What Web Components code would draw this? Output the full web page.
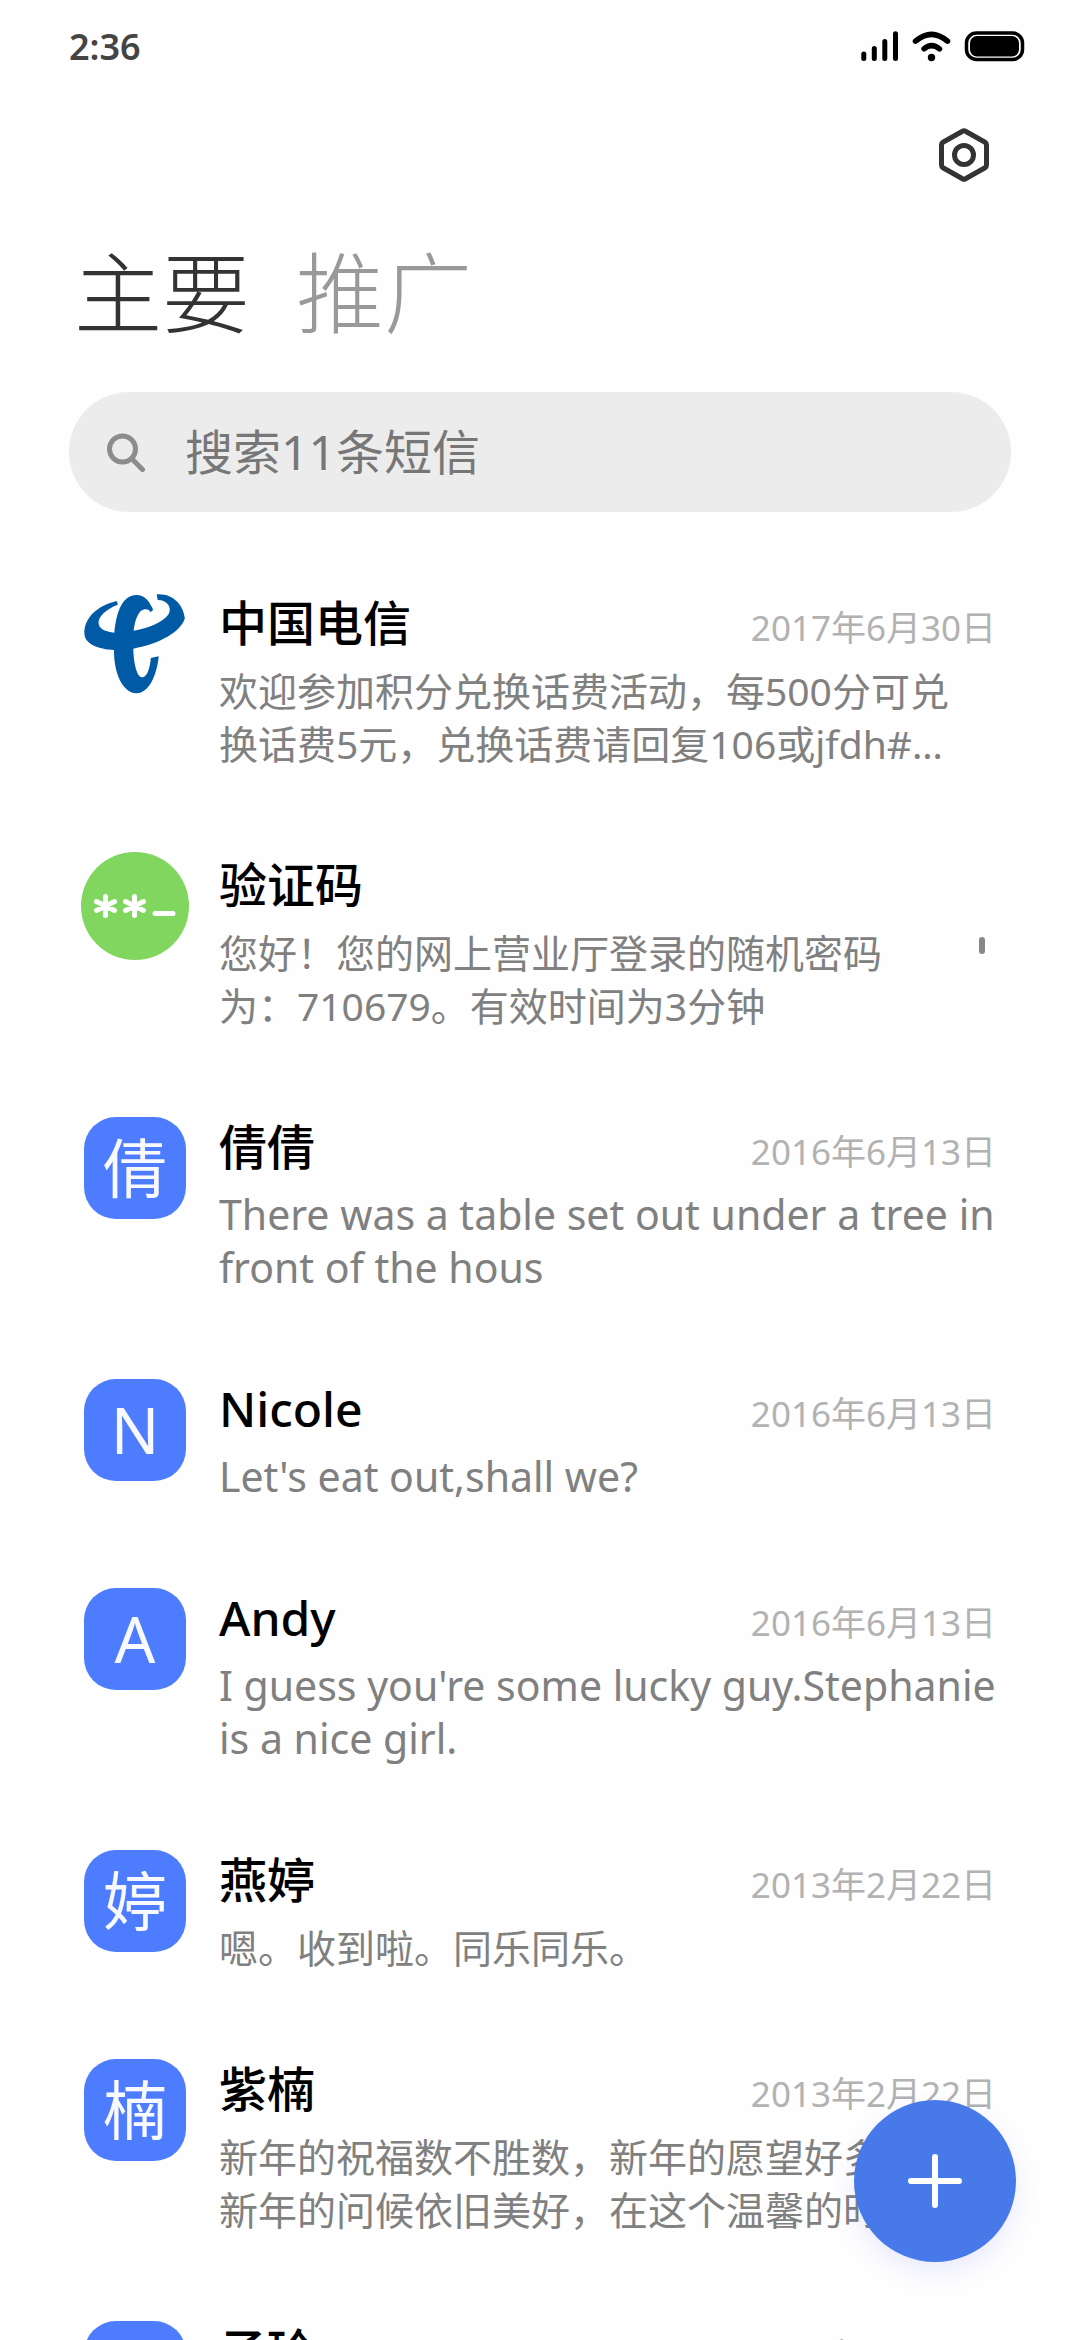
<!DOCTYPE html>
<html lang="zh-CN">
<head>
<meta charset="utf-8">
<meta name="viewport" content="width=device-width, initial-scale=1">
<title>短信</title>
<style>
  html, body { margin: 0; height: 100%; }
  body { background: #fefefe; color: #000; font-family: "Noto Sans", "Noto Sans CJK SC", sans-serif; }
</style>
</head>
<body>
<sms-app>
  <status-bar slot="status">2:36</status-bar>
  <settings-bar slot="tools"></settings-bar>
  <folder-tabs slot="tabs"><span slot="active">主要</span><span slot="other">推广</span></folder-tabs>
  <search-box slot="search" hint="搜索11条短信"></search-box>

  <thread-item><telecom-logo slot="avatar"></telecom-logo><span slot="name">中国电信</span><span slot="date">2017年6月30日</span>欢迎参加积分兑换话费活动，每500分可兑<br>换话费5元，兑换话费请回复106或jfdh#…</thread-item>
  <thread-item muted><code-avatar slot="avatar"></code-avatar><span slot="name">验证码</span>您好！您的网上营业厅登录的随机密码为：710679。有效时间为3分钟</thread-item>
  <thread-item lang="en"><letter-avatar slot="avatar" lang="zh-CN">倩</letter-avatar><span slot="name" lang="zh-CN">倩倩</span><span slot="date" lang="zh-CN">2016年6月13日</span>There was a table set out under a tree in front of the hous</thread-item>
  <thread-item lang="en"><letter-avatar slot="avatar">N</letter-avatar><span slot="name">Nicole</span><span slot="date" lang="zh-CN">2016年6月13日</span>Let's eat out,shall we?</thread-item>
  <thread-item lang="en"><letter-avatar slot="avatar">A</letter-avatar><span slot="name">Andy</span><span slot="date" lang="zh-CN">2016年6月13日</span>I guess you're some lucky guy.Stephanie is a nice girl.</thread-item>
  <thread-item><letter-avatar slot="avatar">婷</letter-avatar><span slot="name">燕婷</span><span slot="date">2013年2月22日</span>嗯。收到啦。同乐同乐。</thread-item>
  <thread-item><letter-avatar slot="avatar">楠</letter-avatar><span slot="name">紫楠</span><span slot="date">2013年2月22日</span>新年的祝福数不胜数，新年的愿望好多多，新年的问候依旧美好，在这个温馨的时刻…</thread-item>
  <thread-item><letter-avatar slot="avatar">玲</letter-avatar><span slot="name">子玲</span><span slot="date">2013年2月22日</span>新年快乐</thread-item>

  <compose-button slot="compose"></compose-button>
</sms-app>

<script>
const define = (name, html) => {
  const template = document.createElement('template');
  template.innerHTML = html;
  customElements.define(name, class extends HTMLElement {
    constructor() {
      super();
      this.attachShadow({ mode: 'open' }).append(template.content.cloneNode(true));
    }
    connectedCallback() {
      const input = this.shadowRoot.querySelector('input');
      if (input) input.placeholder = this.getAttribute('hint');
    }
  });
};

define('sms-app', `
  <style>
    :host { display: flex; flex-direction: column; height: 100vh; position: relative; overflow: hidden; }
    main { flex: 1; min-height: 0; overflow: hidden; padding-top: 42px; }
    ::slotted([slot="compose"]) { position: absolute; right: 64px; bottom: 78px; }
  </style>
  <slot name="status"></slot>
  <slot name="tools"></slot>
  <slot name="tabs"></slot>
  <slot name="search"></slot>
  <main><slot></slot></main>
  <slot name="compose"></slot>`);

define('status-bar', `
  <style>
    :host { display: flex; justify-content: space-between; align-items: center; height: 92px; padding: 0 54px 0 69px; color: #444; font-size: 36px; font-weight: 600; }
    svg { display: block; }
  </style>
  <slot></slot>
  <svg width="166" height="32" viewBox="860 30 166 32" aria-hidden="true">
    <g stroke="#000" stroke-width="5" stroke-linecap="round" fill="none">
      <path d="M863.8 54v4.500M874.300 48.500v10M884.800 41.500v17M895.500 33.700v24.800"/>
      <path d="M915.500 41.200Q931.500 27.500 947.500 41.200" stroke-width="5.500"/>
      <path d="M924 48.800Q931.500 42.500 939.500 48.800" stroke-width="5.500"/>
    </g>
    <circle cx="931.500" cy="57.500" r="3.700"/>
    <rect x="966.500" y="33" width="56" height="26.500" rx="10" fill="#fff" stroke="#000" stroke-width="3.500"/>
    <rect x="970" y="36" width="49" height="20.500" rx="7" fill="#000"/>
  </svg>`);

define('settings-bar', `
  <style>
    :host { display: flex; justify-content: flex-end; height: 126px; align-items: center; padding-right: 86px; }
    button { border: 0; padding: 0; background: none; }
    svg { display: block; }
  </style>
  <button aria-label="设置">
    <svg width="60" height="60" viewBox="0 0 60 60" fill="none" stroke="#333" stroke-width="5" stroke-linejoin="round">
      <path d="M28.500 6.200Q30 5.300 31.500 6.200L51 17.200Q52.500 18.100 52.500 20V40Q52.500 41.900 51 42.800L31.500 53.800Q30 54.700 28.500 53.800L9 42.800Q7.500 41.900 7.500 40V20Q7.500 18.100 9 17.200Z"/>
      <circle cx="30" cy="30" r="9.500"/>
    </svg>
  </button>`);

define('folder-tabs', `
  <style>
    :host { display: block; padding: 6px 74px 0; }
    nav { display: flex; gap: 46px; }
    button { border: 0; padding: 0; background: none; font: 300 88px/128px "Noto Sans CJK SC", sans-serif; color: #999; }
    .active { color: #333; }
  </style>
  <nav>
    <button class="active"><slot name="active"></slot></button>
    <button><slot name="other"></slot></button>
  </nav>`);

define('search-box', `
  <style>
    :host { display: block; margin: 40px 69px 0; }
    label { display: flex; align-items: center; gap: 38px; height: 120px; padding: 0 36px; border-radius: 60px; background: #ececec; }
    svg { flex: none; }
    input { flex: 1; min-width: 0; border: 0; padding: 0; background: none; outline: 0; font: 400 48px/72px "Noto Sans", "Noto Sans CJK SC", sans-serif; color: #333; }
    input::placeholder { color: #777; opacity: 1; }
  </style>
  <label>
    <svg width="42" height="42" viewBox="0 0 42 42" fill="none" stroke="#8c8c8c" stroke-width="5" stroke-linecap="round" aria-hidden="true">
      <circle cx="17.500" cy="18" r="13"/><path d="M27 28L37.500 38.500"/>
    </svg>
    <input type="search" aria-label="搜索短信">
  </label>`);

define('thread-item', `
  <style>
    :host { display: block; }
    a { display: grid; grid-template-columns: 108px minmax(0, 1fr); column-gap: 30px; padding: 36px 84px 46px 81px; color: inherit; text-decoration: none; }
    .head { display: flex; justify-content: space-between; align-items: baseline; height: 60px; margin: 3px 0 11px; line-height: 60px; }
    .name { font-size: 48px; font-weight: 500; }
    .date { font-size: 35px; color: #b2b2b2; }
    .body { display: flex; justify-content: space-between; }
    p { flex: 1; margin: 0; max-height: 106px; overflow: hidden; font-size: 39px; line-height: 53px; color: #808080; }
    :host([lang="en"]) p { font-size: 41px; }
    i { display: none; flex: none; width: 6px; height: 17px; margin: 11px 11px 0 72px; border-radius: 3px; background: #888; }
    :host([muted]) i { display: block; }
  </style>
  <a href="#">
    <slot name="avatar"></slot>
    <div>
      <div class="head"><span class="name"><slot name="name"></slot></span><span class="date"><slot name="date"></slot></span></div>
      <div class="body"><p><slot></slot></p><i></i></div>
    </div>
  </a>`);

define('letter-avatar', `
  <style>
    :host { display: flex; justify-content: center; align-items: center; box-sizing: border-box; width: 102px; height: 102px; margin: 3px; border-radius: 32px; background: #4d7cfe; color: #f8f9ff; font-size: 64px; line-height: 102px; }
  </style>
  <slot></slot>`);

define('code-avatar', `
  <style>:host { display: block; width: 108px; height: 108px; } svg { display: block; }</style>
  <svg width="108" height="108" viewBox="0 0 108 108" stroke="#fff" stroke-width="5" stroke-linecap="round" aria-hidden="true">
    <circle cx="54" cy="54" r="54" fill="#80d65f" stroke="none"/>
    <path d="M24.500 44.500v19M15.500 49.500l18 9M33.500 49.500l-18 9M53.500 44.500v19M44.500 49.500l18 9M62.500 49.500l-18 9M74 61.500h18"/>
  </svg>`);

define('telecom-logo', `
  <style>:host { display: block; width: 108px; height: 108px; } svg { display: block; }</style>
  <svg width="108" height="108" viewBox="61 60 314 324" preserveAspectRatio="none" fill="#005aa5" aria-hidden="true">
    <path d="M165 93L168 104C132 118 112 140 112 158C112 176 132 185 158 188C163 135 178 75 222 75C246 75 259 94 265 108Q272 117 269 122L263 126C258 118 254 117 246 118C228 120 218 150 214 182C262 174 300 156 316 132C326 112 312 90 284 90L281 73C330 70 358 105 363 145C352 185 290 222 213 236C214 275 222 322 240 322C254 320 262 292 264 264L287 259C282 312 260 370 222 370C180 368 156 305 157 240C112 238 72 222 71 192C68 144 110 106 165 93Z"/>
  </svg>`);

define('compose-button', `
  <style>
    :host { display: block; }
    button { display: grid; place-items: center; width: 162px; height: 162px; border: 0; padding: 0; border-radius: 50%; background: #4879e9; box-shadow: 0 10px 24px rgba(80, 90, 240, .12); }
  </style>
  <button aria-label="新建短信">
    <svg width="54" height="54" viewBox="0 0 54 54" stroke="#fff" stroke-width="6" stroke-linecap="round"><path d="M3 27H51M27 3V51"/></svg>
  </button>`);
</script>
</body>
</html>
